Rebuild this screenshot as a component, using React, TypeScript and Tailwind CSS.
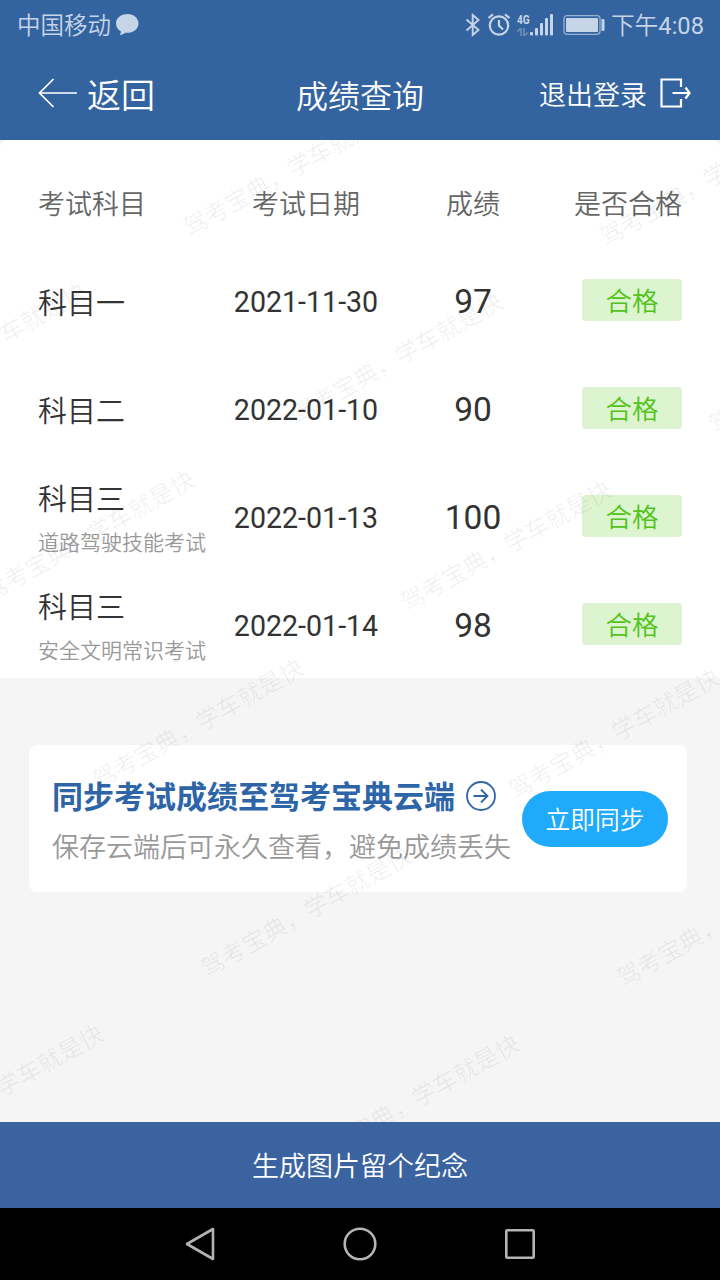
import React from 'react';

interface ExamRecord {
  id: number;
  subject: string;
  detail?: string;
  date: string;
  score: number;
  result: string;
}

const RECORDS: ExamRecord[] = [
  { id: 1, subject: '科目一', date: '2021-11-30', score: 97, result: '合格' },
  { id: 2, subject: '科目二', date: '2022-01-10', score: 90, result: '合格' },
  { id: 3, subject: '科目三', detail: '道路驾驶技能考试', date: '2022-01-13', score: 100, result: '合格' },
  { id: 4, subject: '科目三', detail: '安全文明常识考试', date: '2022-01-14', score: 98, result: '合格' },
];

const WATERMARK = '驾考宝典，学车就是快';

// centre of the first character, relative to the content area
const WATERMARK_SPOTS = [
  [196, 84], [612, 94],
  [-112, 261], [304, 271], [721, 281],
  [-4, 449], [413, 459],
  [105, 637], [521, 647],
  [213, 825], [629, 835],
  [-95, 1003], [321, 1013],
];

const Watermarks: React.FC = () => (
  <div className="pointer-events-none absolute inset-0 overflow-hidden">
    {WATERMARK_SPOTS.map(([x, y]) => (
      <span
        key={`${x}-${y}`}
        className="absolute -ml-3 -mt-3 origin-[12px_12px] -rotate-[29.5deg] whitespace-nowrap text-[23.800px] leading-6 text-black/[0.06]"
        style={{ left: x, top: y }}
      >
        {WATERMARK}
      </span>
    ))}
  </div>
);

const StatusBar: React.FC = () => (
  <div className="flex h-[50px] items-center justify-between pl-[17px] pr-4 text-[#c6d4e8]">
    <div className="flex items-center gap-1">
      <span className="pt-[3px] text-[23.5px] font-[350] leading-none">中国移动</span>
      <svg width="24" height="24" viewBox="0 0 24 24" fill="currentColor">
        <path d="M12.500 1C6 1 1 5 1 10.500c0 3.500 2 6.300 5 8-.1 1.300-.6 2.400-1.300 3.500 2.300-.2 4.300-1 5.800-2.200 7.500.6 13-3.600 13-9.300C23.500 5 18.700 1 12.500 1z" />
      </svg>
    </div>
    <div className="flex items-center">
      <svg width="16" height="24" viewBox="0 0 16 24" fill="none" stroke="currentColor" strokeWidth="1.900">
        <path d="M1.500 6.500 13.500 17 7.700 22V2l5.800 5L1.500 17.500" />
      </svg>
      <svg className="ml-[6px]" width="24" height="24" viewBox="0 0 24 24" fill="none" stroke="currentColor" strokeWidth="2.200">
        <circle cx="12" cy="12.500" r="9.200" />
        <path d="M12 7v5.500l4 4" />
        <path d="M1.500 5 6 1.300M22.500 5 18 1.300" />
      </svg>
      <div className="ml-[6px] flex items-end">
        <div className="flex h-6 w-[13px] flex-col justify-between">
          <span className="origin-left scale-x-[0.75] text-[13.500px] font-bold leading-[12px]">4G</span>
          <svg className="mb-px" width="12" height="8" viewBox="0 0 12 8" fill="none" stroke="currentColor" strokeOpacity="0.4" strokeWidth="1.600">
            <path d="M0.500 3.500 4 0v8M7 0v8l4-3.500" />
          </svg>
        </div>
        <svg width="24" height="24" viewBox="0 0 24 24" fill="currentColor">
          <rect x="0" y="19" width="3" height="3.500" rx="1" />
          <rect x="5" y="15" width="3" height="7.500" rx="1" />
          <rect x="10" y="10" width="3" height="12.500" rx="1" />
          <rect x="15" y="5" width="3" height="17.500" rx="1" />
          <rect x="20" y="1" width="3" height="21.500" rx="1" />
        </svg>
      </div>
      <svg className="ml-[9px]" width="42" height="22" viewBox="0 0 42 22">
        <rect x="1" y="1.700" width="36" height="18.600" rx="3" fill="none" stroke="currentColor" strokeOpacity="0.7" strokeWidth="1.300" />
        <rect x="3" y="4" width="32" height="14" rx="1" fill="currentColor" />
        <rect x="38.500" y="5" width="3" height="12" rx="1" fill="currentColor" />
      </svg>
      <span className="ml-[6px] pt-[3px] text-[23.700px] leading-none"><span className="font-[350]">下午</span>4:08</span>
    </div>
  </div>
);

const TitleBar: React.FC = () => (
  <div className="grid h-[90px] grid-cols-[258px_128px_1fr] items-center pb-1 pl-[38px] pr-[29px] font-[350] text-white">
    <button className="flex items-center gap-[9px]">
      <svg width="40" height="30" viewBox="0 0 40 30" fill="none" stroke="currentColor" strokeWidth="1.700">
        <path d="M15.500 1 1.500 15l14 14M1.500 15H39" />
      </svg>
      <span className="pt-[5px] text-[34px] leading-none">返回</span>
    </button>
    <h1 className="whitespace-nowrap pt-[7px] text-center text-[32px] font-[350] leading-none">成绩查询</h1>
    <button className="flex items-center justify-end gap-[13px] whitespace-nowrap">
      <span className="pt-[7px] text-[27px] leading-none">退出登录</span>
      <svg width="31" height="30" viewBox="0 0 31 30" fill="none" stroke="currentColor" strokeWidth="2.200">
        <path d="M21 9V1.500H1.500v27H21V21" />
        <path d="M12.500 15H30M25.500 9.500l4 5.500-4 5.500" />
      </svg>
    </button>
  </div>
);

const App: React.FC = () => {
  return (
    <div className="flex h-[1280px] w-[720px] flex-col overflow-hidden bg-[#f5f5f5] font-[Roboto,'Noto_Sans_CJK_SC',sans-serif]">
      <header className="bg-[#34649f]">
        <StatusBar />
        <TitleBar />
      </header>

      <main className="relative flex-1">
        {/* Score table */}
        <section className="h-[538px] rounded-t-lg bg-white px-[38px] text-[#333]">
          <div className="grid h-[106px] grid-cols-[190px_156px_178px_1fr] items-center pt-[25px] text-[27px] font-[350] leading-none text-[#666]">
            <span>考试科目</span>
            <span className="text-center">考试日期</span>
            <span className="text-center">成绩</span>
            <span className="whitespace-nowrap text-right">是否合格</span>
          </div>
          {RECORDS.map((record) => (
            <div key={record.id} className="grid h-[108px] grid-cols-[190px_156px_178px_1fr] items-center">
              <div className={`flex flex-col gap-[18px] font-[350] ${record.detail ? 'pt-[7px]' : 'pt-[9px]'}`}>
                <span className="text-[29px] leading-none">{record.subject}</span>
                {record.detail && <span className="whitespace-nowrap text-[21px] leading-none text-[#999]">{record.detail}</span>}
              </div>
              <span className="pt-1 text-center text-[28.600px] leading-none">{record.date}</span>
              <span className="pt-1 text-center text-[33.500px] leading-none">{record.score}</span>
              <span className="flex h-[42px] w-[100px] items-center justify-center justify-self-end rounded-[4px] bg-[#ddf4d0] pt-[5px] text-[26.500px] font-[350] leading-none text-[#52c41a]">
                {record.result}
              </span>
            </div>
          ))}
        </section>

        {/* Cloud sync card */}
        <section className="ml-[29px] mt-[67px] flex h-[147px] w-[658px] items-center justify-between rounded-lg bg-white pl-[23px] pr-[19px]">
          <div className="flex flex-col gap-[22px] pt-1">
            <div className="flex items-center gap-[11px] text-[#2e65a8]">
              <h2 className="whitespace-nowrap pt-[3px] text-[31px] font-bold leading-none">同步考试成绩至驾考宝典云端</h2>
              <svg className="-mt-px" width="30" height="30" viewBox="0 0 30 30" fill="none" stroke="currentColor" strokeWidth="1.800">
                <circle cx="15" cy="15" r="14" />
                <path d="M7.500 15h14M15 8.500l6.500 6.500-6.500 6.500" />
              </svg>
            </div>
            <p className="whitespace-nowrap text-[27px] font-[350] leading-none text-[#999]">保存云端后可永久查看，避免成绩丢失</p>
          </div>
          <button className="h-14 w-[146px] shrink-0 rounded-full bg-[#20aafb] pt-[6px] text-[24.700px] font-[350] leading-none text-white">立即同步</button>
        </section>

        <Watermarks />
      </main>

      <button className="h-[86px] bg-[#3b63a0] pt-[5px] text-[27px] font-[350] leading-none text-white">生成图片留个纪念</button>

      {/* System navigation */}
      <nav className="flex h-[72px] items-center justify-center gap-[124px] bg-black text-[#b4b4b4]">
        <svg width="36" height="36" viewBox="0 0 36 36" fill="none" stroke="currentColor" strokeWidth="2.600" strokeLinejoin="round">
          <path d="M31 3v30L5 18z" />
        </svg>
        <svg width="36" height="36" viewBox="0 0 36 36" fill="none" stroke="currentColor" strokeWidth="2.600">
          <circle cx="18" cy="18" r="15.300" />
        </svg>
        <svg width="36" height="36" viewBox="0 0 36 36" fill="none" stroke="currentColor" strokeWidth="2.600">
          <rect x="4.300" y="4.300" width="27.400" height="27.400" rx="1" />
        </svg>
      </nav>
    </div>
  );
};

export default App;
